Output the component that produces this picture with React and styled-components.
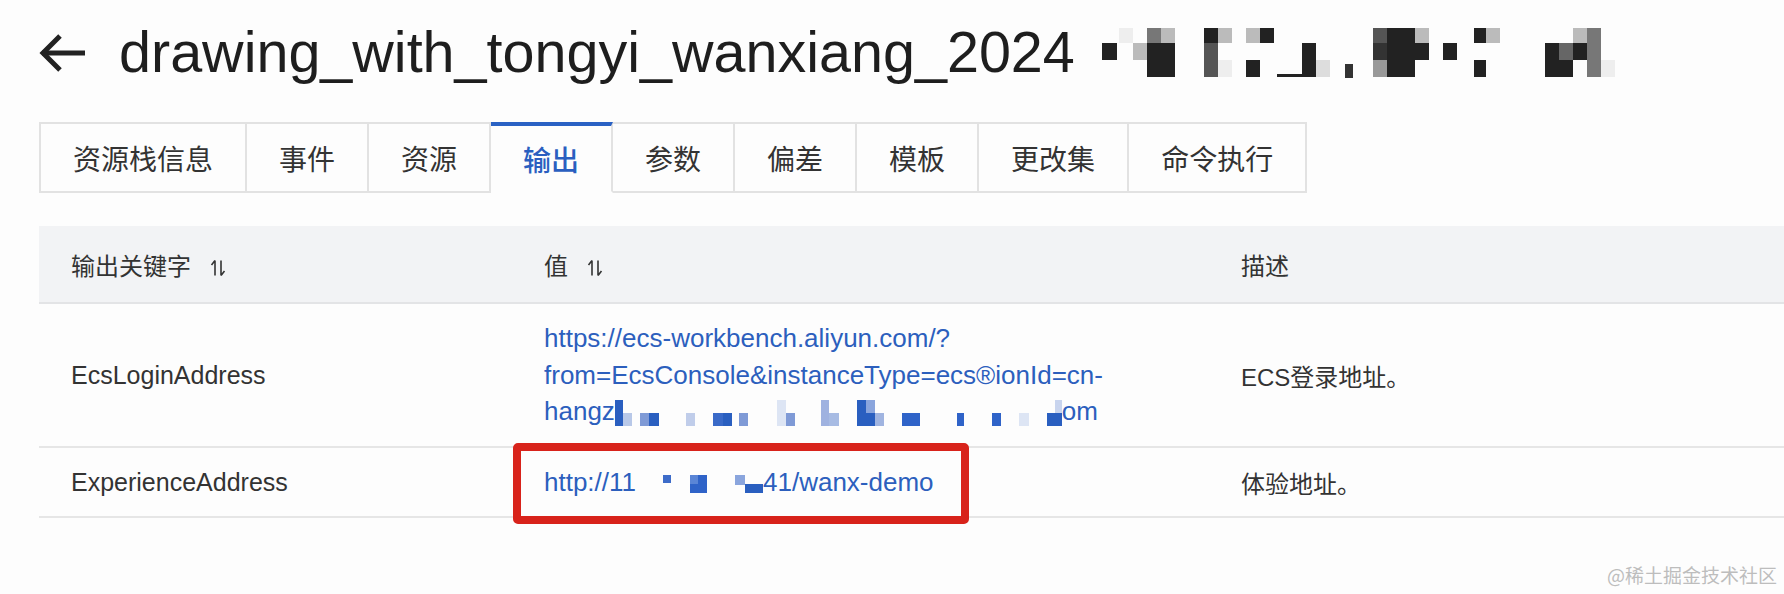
import React from 'react';
import styled, { createGlobalStyle, css } from 'styled-components';

const GlobalStyle = createGlobalStyle`
  body {
    margin: 0;
    background: #fdfdfd;
    overflow: hidden;
    font-family: "Liberation Sans", "Noto Sans CJK SC", sans-serif;
  }
`;

const Page = styled.div`
  position: relative;
  width: 1784px;
  height: 594px;
  overflow: hidden;
`;

const Header = styled.div`
  display: flex;
  align-items: center;
  height: 57px;
  margin-top: 24px;
  padding-left: 38px;
  gap: 33px;
`;

const Title = styled.h1`
  margin: 0;
  font-family: "Liberation Sans", sans-serif;
  font-size: 57.5px;
  font-weight: normal;
  line-height: 1;
  color: #1e1e1e;
  white-space: nowrap;
`;

const Mosaic = styled.svg`
  display: block;
  flex-shrink: 0;
  margin-left: ${({ $offset }) => $offset || 0}px;
`;

const InlineMosaic = styled.svg`
  vertical-align: middle;
`;

const Tabs = styled.div`
  display: flex;
  margin: 41px 0 0 39px;
`;

const Tab = styled.div`
  display: flex;
  align-items: center;
  box-sizing: border-box;
  height: 71px;
  padding: 0 32px;
  font-family: "Noto Sans CJK SC", sans-serif;
  font-size: 28px;
  color: #333;
  background: #fdfdfd;
  border: 2px solid #e2e2e2;
  border-left: none;
  white-space: nowrap;

  &:first-child {
    border-left: 2px solid #e2e2e2;
  }

  ${({ $active }) =>
    $active &&
    css`
      color: #2a5fc0;
      font-weight: 500;
      border-top: 4px solid #2a62c4;
      border-bottom-color: transparent;
    `}
`;

const Table = styled.table`
  margin: 33px 0 0 39px;
  width: 1745px;
  border-collapse: collapse;
  table-layout: fixed;
`;

const HeadCell = styled.th`
  height: 76px;
  padding: 0 32px;
  background: #f2f3f5;
  border-bottom: 2px solid #e3e4e6;
  text-align: left;
  font-family: "Noto Sans CJK SC", sans-serif;
  font-size: 24px;
  font-weight: normal;
  color: #333;
  white-space: nowrap;
`;

const SortIcon = styled.svg`
  margin-left: 19px;
  vertical-align: -2px;
`;

const Cell = styled.td`
  height: ${({ $h }) => $h}px;
  padding: 0 32px;
  border-bottom: 2px solid #e6e6e6;
  font-size: ${({ $cjk }) => ($cjk ? 24 : 25)}px;
  color: #333;
  vertical-align: middle;
`;

const Link = styled.a`
  display: block;
  color: #2c5fbd;
  font-family: "Liberation Sans", sans-serif;
  font-size: 26px;
  line-height: 36.5px;
  text-decoration: none;
  white-space: nowrap;
`;

// red annotation frame drawn over the second link
const Marked = styled.span`
  position: relative;
  display: inline-block;

  &::after {
    content: '';
    position: absolute;
    top: -21px;
    bottom: -24px;
    left: -31px;
    right: -35px;
    border: 8px solid #d8231b;
    border-radius: 5px;
  }
`;

const Watermark = styled.div`
  position: absolute;
  right: 7px;
  bottom: 6px;
  font-family: "Noto Sans CJK SC", sans-serif;
  font-size: 19px;
  color: #bdbdbd;
`;

const titleBlocks = [
  [19, 0, 14, 15, '#eee'], [47, 0, 14, 15, '#777'], [61, 0, 14, 15, '#bbb'],
  [104, 0, 14, 15, '#222'], [118, 0, 14, 15, '#bbb'], [146, 0, 14, 15, '#bbb'],
  [160, 0, 14, 15, '#222'], [273, 0, 14, 15, '#555'], [287, 0, 28, 15, '#222'],
  [315, 0, 14, 15, '#bbb'], [374, 0, 12, 15, '#222'], [386, 0, 14, 15, '#bbb'],
  [473, 0, 14, 15, '#bbb'], [487, 0, 14, 15, '#777'],
  [2, 15, 15, 17, '#222'], [33, 15, 14, 17, '#bbb'], [47, 15, 28, 17, '#222'],
  [104, 15, 14, 17, '#555'], [202, 15, 14, 17, '#222'], [273, 15, 14, 17, '#333'],
  [287, 15, 42, 17, '#222'], [343, 15, 14, 17, '#222'], [445, 15, 14, 17, '#222'],
  [459, 15, 14, 17, '#666'], [473, 15, 14, 17, '#222'], [487, 15, 14, 17, '#777'],
  [47, 32, 28, 17, '#222'], [104, 32, 14, 17, '#555'], [118, 32, 14, 17, '#eee'],
  [146, 32, 14, 17, '#222'], [177, 46, 25, 3, '#222'], [202, 32, 14, 17, '#222'],
  [216, 32, 14, 17, '#ddd'], [245, 36, 8, 14, '#333'], [273, 32, 14, 17, '#999'],
  [287, 32, 28, 17, '#222'], [374, 32, 12, 17, '#222'], [445, 32, 28, 17, '#222'],
  [487, 32, 14, 17, '#777'], [501, 32, 14, 17, '#eee'],
];

const hostBlocks = [
  [0, 0, 8, 26, '#2a5fc0'], [8, 13, 9, 13, '#b8c8e8'], [25, 13, 9, 13, '#7f9ad6'],
  [34, 13, 10, 13, '#2a5fc0'], [71, 13, 9, 13, '#c0cdea'], [98, 13, 10, 13, '#3a6ac8'],
  [108, 13, 9, 13, '#2a5fc0'], [124, 13, 9, 13, '#7f9ad6'], [162, 0, 9, 26, '#dde5f4'],
  [171, 13, 9, 13, '#7f9ad6'], [206, 0, 8, 26, '#9fb2e0'], [214, 13, 10, 13, '#a7bbe3'],
  [242, 0, 9, 26, '#2a5fc0'], [251, 0, 9, 13, '#8aa5dd'], [251, 13, 9, 13, '#2a5fc0'],
  [260, 13, 9, 13, '#a0b4e0'], [287, 13, 18, 13, '#2f63c8'], [342, 13, 7, 13, '#2f63c8'],
  [377, 13, 9, 13, '#2f63c8'], [404, 13, 10, 13, '#dde5f4'], [432, 13, 15, 13, '#2a5fc0'],
  [440, 0, 7, 13, '#c8d4ee'],
];

const ipBlocks = [
  [27, 1, 8, 8, '#3d6cc9'], [54, 1, 17, 18, '#2f63c8'], [54, 1, 8, 9, '#5a85d6'],
  [99, 1, 10, 10, '#8aa5dd'], [109, 10, 18, 9, '#2a5fc0'],
];

const Blocks = ({ items }) =>
  items.map(([x, y, w, h, fill], i) => <rect key={i} x={x} y={y} width={w} height={h} fill={fill} />);

const tabs = ['资源栈信息', '事件', '资源', '输出', '参数', '偏差', '模板', '更改集', '命令执行'];

const Sort = () => (
  <SortIcon width="16" height="18" viewBox="0 0 16 18" fill="none" stroke="#333" strokeWidth="1.6">
    <path d="M5 1.5V16.5M5 1.5L1.5 6" />
    <path d="M11 1.5V16.5M11 16.5L14.5 12" />
  </SortIcon>
);

const App = () => {
  return (
    <Page>
      <GlobalStyle />
      <Header>
        <svg width="48" height="40" viewBox="0 0 48 40" fill="none" stroke="#222" strokeWidth="5">
          <path d="M4 20H47" />
          <path d="M22 3L5 20L22 37" />
        </svg>
        <Title>drawing_with_tongyi_wanxiang_2024</Title>
        <Mosaic width="520" height="50" viewBox="0 0 520 50" $offset={-8}>
          <Blocks items={titleBlocks} />
        </Mosaic>
      </Header>

      <Tabs>
        {tabs.map((t) => (
          <Tab key={t} $active={t === '输出'}>{t}</Tab>
        ))}
      </Tabs>

      <Table>
        <colgroup>
          <col style={{ width: 473 }} />
          <col style={{ width: 697 }} />
          <col />
        </colgroup>
        <thead>
          <tr>
            <HeadCell>输出关键字<Sort /></HeadCell>
            <HeadCell>值<Sort /></HeadCell>
            <HeadCell>描述</HeadCell>
          </tr>
        </thead>
        <tbody>
          <tr>
            <Cell $h={142}>EcsLoginAddress</Cell>
            <Cell $h={142}>
              <Link>https://ecs-workbench.aliyun.com/?</Link>
              <Link>from=EcsConsole&amp;instanceType=ecs®ionId=cn-</Link>
              <Link>
                hangz
                <InlineMosaic width="447" height="26" viewBox="0 0 447 26">
                  <Blocks items={hostBlocks} />
                </InlineMosaic>
                om
              </Link>
            </Cell>
            <Cell $h={142} $cjk>ECS登录地址。</Cell>
          </tr>
          <tr>
            <Cell $h={68}>ExperienceAddress</Cell>
            <Cell $h={68}>
              <Link as="span">
                <Marked>
                  http://11
                  <InlineMosaic width="127" height="20" viewBox="0 0 127 20">
                    <Blocks items={ipBlocks} />
                  </InlineMosaic>
                  41/wanx-demo
                </Marked>
              </Link>
            </Cell>
            <Cell $h={68} $cjk>体验地址。</Cell>
          </tr>
        </tbody>
      </Table>

      <Watermark>@稀土掘金技术社区</Watermark>
    </Page>
  );
};

export default App;
